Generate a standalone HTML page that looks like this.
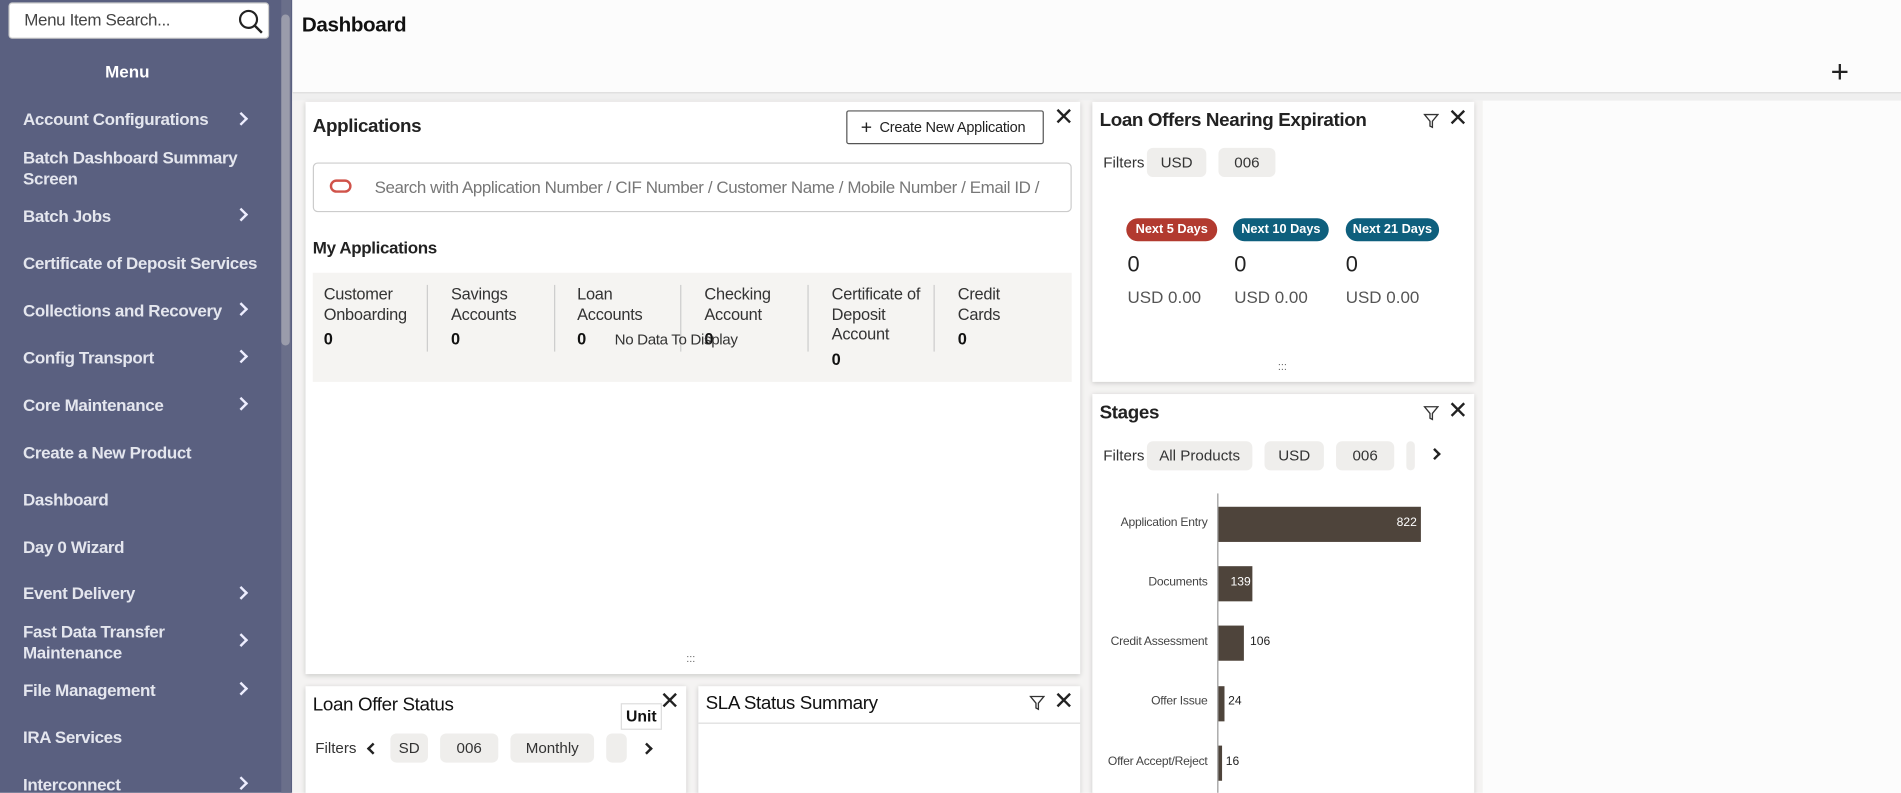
<!DOCTYPE html>
<html><head><meta charset="utf-8"><style>
*{box-sizing:border-box;margin:0;padding:0}
html,body{width:1901px;height:793px;overflow:hidden;background:#fff;font-family:"Liberation Sans",sans-serif}
#w{position:absolute;left:0;top:0;width:1568px;height:654px;transform:scale(1.21237);transform-origin:0 0;overflow:hidden;background:#fcfcfc}
.a{position:absolute}
#side{left:0;top:0;width:241px;height:654px;background:#5a6080}
.mi{position:absolute;left:19px;color:#e4e6ee;font-size:14px;font-weight:bold;line-height:17px;letter-spacing:-0.3px}
.ch{position:absolute;left:195px;width:8px;height:8px;border-right:2px solid #eef;border-top:2px solid #eef;transform:rotate(45deg)}
.card{position:absolute;background:#fff;box-shadow:0 1px 4px rgba(0,0,0,.18)}
.t{position:absolute;font-size:15.5px;color:#222;font-weight:bold;letter-spacing:-0.3px}
.x{position:absolute;font-size:20px;color:#222;line-height:20px}
.chip{position:absolute;height:24px;background:#efeeec;border-radius:5px;font-size:12.5px;color:#333;line-height:24px;text-align:center}
.col{position:absolute;font-size:13.5px;color:#333;line-height:16.5px;letter-spacing:-0.2px}
.col b{display:block;margin-top:4px;color:#111}
.dv{position:absolute;top:235px;width:1px;height:55px;background:#ccc}
.pill{position:absolute;height:19px;border-radius:10px;color:#fff;font-size:10.5px;font-weight:bold;line-height:19px;text-align:center}
.bl{position:absolute;width:90px;text-align:right;font-size:10px;color:#444;left:906px;letter-spacing:-0.2px}
.bar{position:absolute;left:1005px;height:29px;background:#4e443b}
.bv{position:absolute;font-size:10px;color:#222}
</style></head><body><div id="w">
<div id="side" class="a"></div>
<div class="a" style="left:232px;top:0;width:8px;height:654px;background:#6a6f8a"></div>
<div class="a" style="left:232px;top:12px;width:7px;height:273px;background:#9a9cab;border-radius:4px"></div>
<div class="a" style="left:7px;top:2px;width:215px;height:30px;background:#fff;border-radius:3px;border:1px solid #ccc"></div>
<div class="a" style="left:20px;top:8px;font-size:14px;color:#444;letter-spacing:-0.3px">Menu Item Search...</div>
<svg class="a" style="left:196px;top:7px" width="22" height="22" viewBox="0 0 22 22"><circle cx="9" cy="9" r="7" fill="none" stroke="#222" stroke-width="1.8"/><line x1="14" y1="14" x2="20" y2="20" stroke="#222" stroke-width="2"/></svg>
<div class="a" style="left:0;width:210px;top:51px;text-align:center;color:#fff;font-weight:bold;font-size:14px">Menu</div>
<div class="mi" style="top:90px">Account Configurations</div><div class="ch" style="top:94px"></div>
<div class="mi" style="top:122px">Batch Dashboard Summary<br>Screen</div>
<div class="mi" style="top:170px">Batch Jobs</div><div class="ch" style="top:173px"></div>
<div class="mi" style="top:209px">Certificate of Deposit Services</div>
<div class="mi" style="top:248px">Collections and Recovery</div><div class="ch" style="top:251px"></div>
<div class="mi" style="top:287px">Config Transport</div><div class="ch" style="top:290px"></div>
<div class="mi" style="top:326px">Core Maintenance</div><div class="ch" style="top:329px"></div>
<div class="mi" style="top:365px">Create a New Product</div>
<div class="mi" style="top:404px">Dashboard</div>
<div class="mi" style="top:443px">Day 0 Wizard</div>
<div class="mi" style="top:481px">Event Delivery</div><div class="ch" style="top:485px"></div>
<div class="mi" style="top:513px">Fast Data Transfer<br>Maintenance</div><div class="ch" style="top:524px"></div>
<div class="mi" style="top:561px">File Management</div><div class="ch" style="top:564px"></div>
<div class="mi" style="top:600px">IRA Services</div>
<div class="mi" style="top:639px">Interconnect</div><div class="ch" style="top:642px"></div>

<div class="a" style="left:241px;top:76px;width:1327px;height:7px;background:#efefef;border-top:1px solid #ddd"></div>
<div class="a" style="left:241px;top:83px;width:982px;height:571px;background:#f4f3f2"></div>
<div class="a" style="left:249px;top:11px;font-size:17px;font-weight:bold;color:#111;letter-spacing:-0.3px">Dashboard</div>
<div class="a" style="left:1510px;top:44px;font-size:26px;color:#222;font-weight:300">+</div>

<div class="card" style="left:252px;top:84px;width:639px;height:472px"></div>
<div class="t" style="left:258px;top:96px">Applications</div>
<div class="a" style="left:698px;top:91px;width:163px;height:28px;border:1px solid #555;border-radius:2px;font-size:12px;color:#222;line-height:26px;padding-left:11px;letter-spacing:-0.2px;white-space:nowrap"><span style="font-size:16px;vertical-align:-1px">+</span>&nbsp; Create New Application</div>
<div class="x" style="left:869px;top:87px">✕</div>
<div class="a" style="left:258px;top:134px;width:626px;height:41px;border:1px solid #ccc;border-radius:4px"></div>
<div class="a" style="left:272px;top:148px;width:18px;height:11px;border:2.5px solid #d0534a;border-radius:6px"></div>
<div class="a" style="left:309px;top:146px;font-size:14px;color:#777;white-space:nowrap;width:560px;overflow:hidden;letter-spacing:-0.35px">Search with Application Number / CIF Number / Customer Name / Mobile Number / Email ID /</div>
<div class="a" style="left:258px;top:196px;font-size:14px;font-weight:bold;color:#222;letter-spacing:-0.3px">My Applications</div>
<div class="a" style="left:258px;top:225px;width:626px;height:90px;background:#f5f4f2"></div>
<div class="col" style="left:267px;top:235px">Customer<br>Onboarding<b>0</b></div>
<div class="dv" style="left:352px"></div>
<div class="col" style="left:372px;top:235px">Savings<br>Accounts<b>0</b></div>
<div class="dv" style="left:457px"></div>
<div class="col" style="left:476px;top:235px">Loan<br>Accounts<b>0</b></div>
<div class="dv" style="left:561px"></div>
<div class="col" style="left:581px;top:235px">Checking<br>Account<b>0</b></div>
<div class="dv" style="left:666px"></div>
<div class="col" style="left:686px;top:235px">Certificate of<br>Deposit<br>Account<b>0</b></div>
<div class="dv" style="left:770px"></div>
<div class="col" style="left:790px;top:235px">Credit<br>Cards<b>0</b></div>
<div class="a" style="left:507px;top:273px;font-size:12.5px;color:#333;letter-spacing:-0.3px">No Data To Display</div>
<div class="a" style="left:566px;top:538px;font-size:9px;color:#666">:::</div>

<div class="card" style="left:901px;top:84px;width:315px;height:231px"></div>
<div class="t" style="left:907px;top:91px">Loan Offers Nearing Expiration</div>
<svg class="a" style="left:1174px;top:93px" width="13" height="13" viewBox="0 0 13 13"><path d="M1 1.5H12L7.5 7V12L5.5 11V7Z" fill="none" stroke="#333" stroke-width="1.1"/></svg>
<div class="x" style="left:1194px;top:88px">✕</div>
<div class="a" style="left:910px;top:127px;font-size:12.5px;color:#333">Filters</div>
<div class="chip" style="left:946px;top:122px;width:49px">USD</div>
<div class="chip" style="left:1005px;top:122px;width:47px">006</div>
<div class="pill" style="left:929px;top:180px;width:75px;background:#b23a2f">Next 5 Days</div>
<div class="pill" style="left:1017px;top:180px;width:79px;background:#0e5f7d">Next 10 Days</div>
<div class="pill" style="left:1110px;top:180px;width:77px;background:#0e5f7d">Next 21 Days</div>
<div class="a" style="left:930px;top:208px;font-size:18px;color:#222">0</div>
<div class="a" style="left:1018px;top:208px;font-size:18px;color:#222">0</div>
<div class="a" style="left:1110px;top:208px;font-size:18px;color:#222">0</div>
<div class="a" style="left:930px;top:237px;font-size:14px;color:#555">USD 0.00</div>
<div class="a" style="left:1018px;top:237px;font-size:14px;color:#555">USD 0.00</div>
<div class="a" style="left:1110px;top:237px;font-size:14px;color:#555">USD 0.00</div>
<div class="a" style="left:1054px;top:297px;font-size:9px;color:#666">:::</div>

<div class="card" style="left:901px;top:325px;width:315px;height:340px"></div>
<div class="t" style="left:907px;top:332px">Stages</div>
<svg class="a" style="left:1174px;top:334px" width="13" height="13" viewBox="0 0 13 13"><path d="M1 1.5H12L7.5 7V12L5.5 11V7Z" fill="none" stroke="#333" stroke-width="1.1"/></svg>
<div class="x" style="left:1194px;top:329px">✕</div>
<div class="a" style="left:910px;top:369px;font-size:12.5px;color:#333">Filters</div>
<div class="chip" style="left:946px;top:364px;width:87px">All Products</div>
<div class="chip" style="left:1043px;top:364px;width:49px">USD</div>
<div class="chip" style="left:1102px;top:364px;width:48px">006</div>
<div class="chip" style="left:1160px;top:364px;width:7px"></div>
<div class="a" style="left:1180px;top:371px;width:7px;height:7px;border-right:2px solid #222;border-top:2px solid #222;transform:rotate(45deg)"></div>
<div class="a" style="left:1004px;top:407px;width:1px;height:247px;background:#999"></div>
<div class="bl" style="top:426px">Application Entry</div><div class="bar" style="top:418px;width:167px"></div><div class="bv" style="left:1152px;top:426px;color:#fff">822</div>
<div class="bl" style="top:475px">Documents</div><div class="bar" style="top:467px;width:28px"></div><div class="bv" style="left:1015px;top:475px;color:#fff">139</div>
<div class="bl" style="top:524px">Credit Assessment</div><div class="bar" style="top:516px;width:21px"></div><div class="bv" style="left:1031px;top:524px">106</div>
<div class="bl" style="top:573px">Offer Issue</div><div class="bar" style="top:566px;width:5px"></div><div class="bv" style="left:1013px;top:573px">24</div>
<div class="bl" style="top:623px">Offer Accept/Reject</div><div class="bar" style="top:615px;width:3px"></div><div class="bv" style="left:1011px;top:623px">16</div>

<div class="card" style="left:252px;top:566px;width:314px;height:100px"></div>
<div class="t" style="left:258px;top:573px;font-weight:normal;color:#111">Loan Offer Status</div>
<div class="x" style="left:544px;top:569px">✕</div>
<div class="a" style="left:512px;top:580px;width:34px;height:22px;background:#fff;border:1px solid #ddd;font-size:13px;font-weight:bold;text-align:center;line-height:20px;color:#111">Unit</div>
<div class="a" style="left:260px;top:610px;font-size:12.5px;color:#333">Filters</div>
<div class="a" style="left:304px;top:614px;width:7px;height:7px;border-left:2px solid #222;border-bottom:2px solid #222;transform:rotate(45deg)"></div>
<div class="chip" style="left:322px;top:605px;width:31px">SD</div>
<div class="chip" style="left:363px;top:605px;width:48px">006</div>
<div class="chip" style="left:421px;top:605px;width:69px">Monthly</div>
<div class="chip" style="left:500px;top:605px;width:17px"></div>
<div class="a" style="left:530px;top:614px;width:7px;height:7px;border-right:2px solid #222;border-top:2px solid #222;transform:rotate(45deg)"></div>

<div class="card" style="left:576px;top:566px;width:315px;height:100px"></div>
<div class="t" style="left:582px;top:572px;font-weight:normal;color:#111">SLA Status Summary</div>
<svg class="a" style="left:849px;top:573px" width="13" height="13" viewBox="0 0 13 13"><path d="M1 1.5H12L7.5 7V12L5.5 11V7Z" fill="none" stroke="#333" stroke-width="1.1"/></svg>
<div class="x" style="left:869px;top:569px">✕</div>
<div class="a" style="left:576px;top:596px;width:315px;height:1px;background:#ddd"></div>
</div></body></html>
